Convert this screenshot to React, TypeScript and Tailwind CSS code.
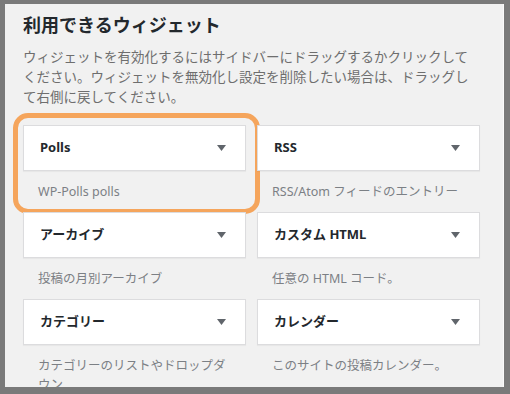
const widgets = [
  { name: 'Polls', desc: 'WP-Polls polls', highlight: true },
  { name: 'RSS', desc: 'RSS/Atom フィードのエントリー' },
  { name: 'アーカイブ', desc: '投稿の月別アーカイブ' },
  { name: 'カスタム HTML', desc: '任意の HTML コード。' },
  { name: 'カテゴリー', desc: 'カテゴリーのリストやドロップダウン' },
  { name: 'カレンダー', desc: 'このサイトの投稿カレンダー。' },
];

function Arrow() {
  return (
    <svg width="9" height="6" viewBox="0 0 9 6" className="shrink-0">
      <path d="M0 0 L9 0 L4.5 6 Z" fill="#60656b" />
    </svg>
  );
}

export default function App() {
  return (
    <div
      className="h-[394px] w-[510px] bg-[#7a7a7a] pt-[4px] pl-[5px] pr-[6px] pb-[7px]"
      style={{ fontFamily: '"Noto Sans", "Noto Sans CJK JP", sans-serif' }}
    >
      <div className="h-full overflow-hidden bg-[#f1f1f1] border-r border-[#fafafa] px-[18px] pt-[8px]">
        <h2 className="text-[18px] leading-[26px] font-bold text-[#23282d]">利用できるウィジェット</h2>
        <p className="mt-[9px] text-[13.5px] leading-[20px] text-[#6e6e6e]">
          ウィジェットを有効化するにはサイドバーにドラッグするかクリックして
          <br />
          ください。ウィジェットを無効化し設定を削除したい場合は、ドラッグし
          <br />
          て右側に戻してください。
        </p>

        <div className="mt-[18px] grid w-[457px] grid-cols-2 gap-x-[11px]">
          {widgets.map((w) => (
            <div key={w.name} className="relative flex flex-col">
              {w.highlight && (
                <div className="pointer-events-none absolute -left-[10px] -top-[12px] -right-[14px] -bottom-[2px] rounded-[15px] border-[5px] border-[#f5a55c]" />
              )}
              <div className="flex h-[46px] items-center justify-between border border-[#dcdcde] bg-white pl-[16px] pr-[19px] shadow-[0_1px_1px_rgba(0,0,0,0.04)]">
                <span className="text-[13px] font-bold text-[#23282d]">{w.name}</span>
                <Arrow />
              </div>
              <div className="pl-[15px] pr-[20px] pt-[11px] pb-[11px] text-[12.5px] leading-[19px] text-[#7c8085]">
                {w.desc}
              </div>
            </div>
          ))}
        </div>
      </div>
    </div>
  );
}
